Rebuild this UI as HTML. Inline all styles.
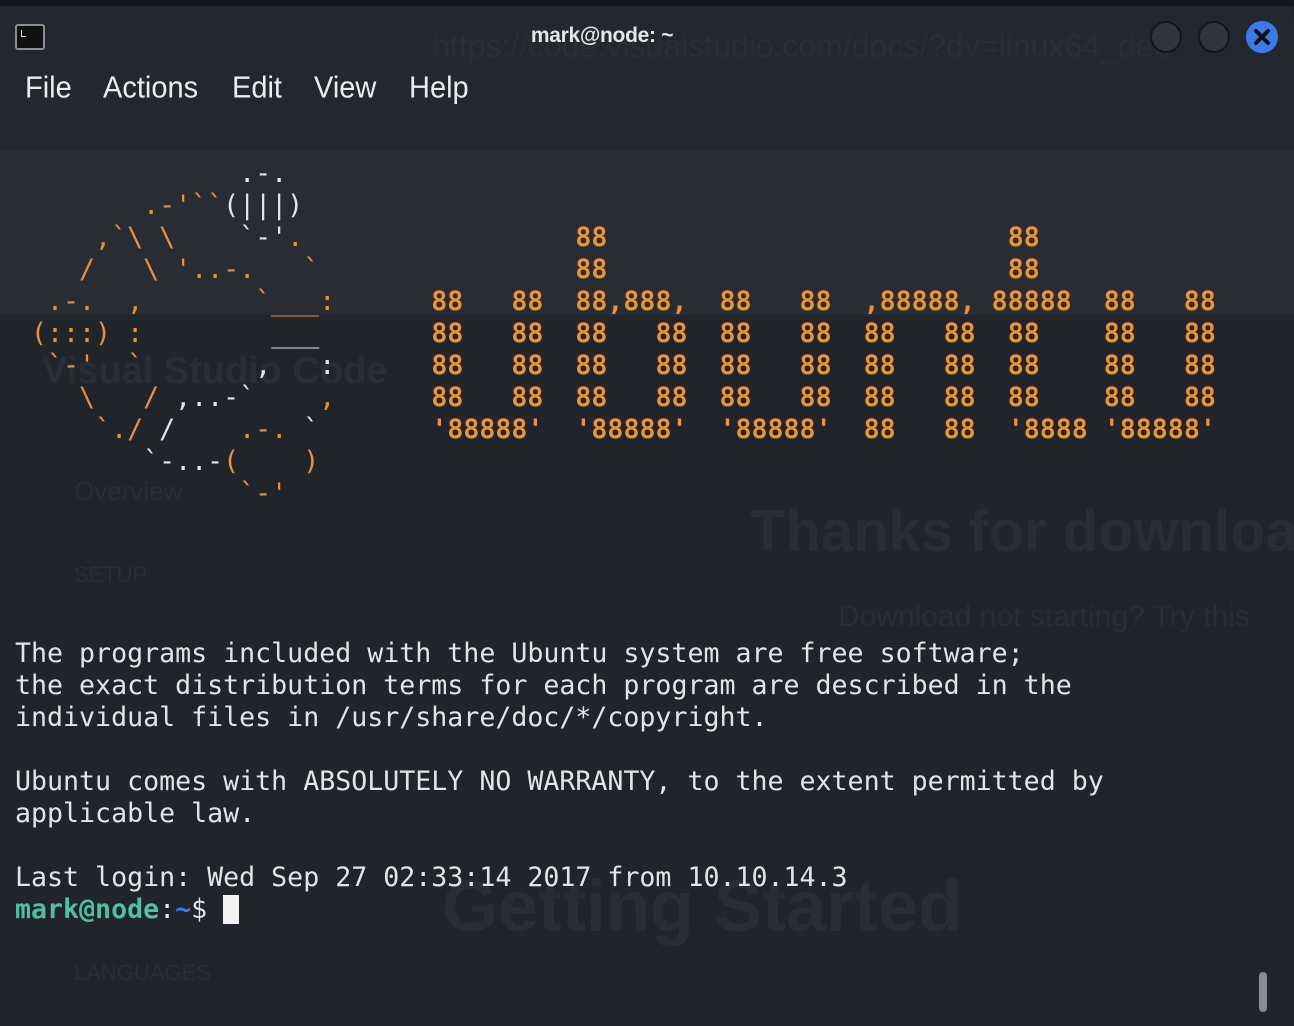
<!DOCTYPE html>
<html><head><meta charset="utf-8"><style>
html,body{margin:0;padding:0}
body{width:1294px;height:1026px;background:#21242b;position:relative;overflow:hidden;font-family:"Liberation Sans",sans-serif}
.topstrip{position:absolute;left:0;top:0;width:1294px;height:6px;background:#14161a}
.head{position:absolute;left:0;top:6px;width:1294px;height:144px;background:#24272e;border-top-right-radius:14px}
.band{position:absolute;left:0;top:150px;width:1294px;height:165px;background:#292c33}
.ghost{position:absolute;color:#2a2d34;white-space:nowrap}
.title{position:absolute;top:24px;left:522px;width:160px;text-align:center;color:#e6e6e6;font-size:21px;font-weight:bold;letter-spacing:-0.3px}
.menu{position:absolute;top:72px;color:#ececec;font-size:29px;transform:scaleY(1.05)}
.btn{position:absolute;top:21px;width:32px;height:32px;border-radius:50%;background:#31343c;border:2px solid #14161a;box-sizing:border-box}
.icon{position:absolute;left:15px;top:24px;width:30px;height:26px;border:2px solid #8a8d93;border-radius:3px;background:#111;box-sizing:border-box}
.icon:after{content:"";position:absolute;left:4px;top:4px;width:4px;height:6px;border-left:1px solid #ddd;border-bottom:1px solid #ddd}
pre{position:absolute;left:15px;top:158px;margin:0;font-family:"DejaVu Sans Mono","Liberation Mono",monospace;font-size:26.6px;line-height:32px;color:#e4e4e4}
.o{color:#e8923a}.w{color:#e4e4e4}.b{color:#e8923a;font-weight:bold}
.g{color:#4fc1a0;font-weight:bold}.bl{color:#3b7ae8;font-weight:bold}
.cur{display:inline-block;width:16px;height:29px;background:#f2f2f2;vertical-align:-6px}
.sb{position:absolute;left:1259px;top:972px;width:8px;height:40px;border-radius:4px;background:#8a8c90}
</style></head><body>
<div class="topstrip"></div>
<div class="head"></div>
<div class="band"></div>
<div class="ghost" style="left:432px;top:28px;font-size:32px">https://code.visualstudio.com/docs/?dv=linux64_deb</div>
<div class="ghost" style="left:30px;top:170px;font-size:24px;line-height:32px">We use optional cookies to improve your experience on our websites, such as through social media connectio<br>to display personalized advertising based on your online activity. If you reject optional cookies, only cookies<br>necessary to provide you the services will be used. You may change your selection by clicking “Manage Cook<br>the bottom of the page. Privacy Statement Third-Party Cookies</div>
<div class="ghost" style="left:42px;top:350px;font-size:38px;font-weight:bold">Visual Studio Code</div>
<div class="ghost" style="left:750px;top:498px;font-size:58px;font-weight:bold">Thanks for downloa</div>
<div class="ghost" style="left:838px;top:600px;font-size:30px">Download not starting? Try this</div>
<div class="ghost" style="left:442px;top:866px;font-size:72px;font-weight:bold">Getting Started</div>
<div class="ghost" style="left:74px;top:476px;font-size:26px">Overview</div>
<div class="ghost" style="left:74px;top:562px;font-size:22px">SETUP</div>
<div class="ghost" style="left:74px;top:960px;font-size:22px">LANGUAGES</div>
<div class="icon"></div>
<div class="title">mark@node: ~</div>
<div class="menu" style="left:25px">File</div>
<div class="menu" style="left:103px">Actions</div>
<div class="menu" style="left:232px">Edit</div>
<div class="menu" style="left:314px">View</div>
<div class="menu" style="left:409px">Help</div>
<div class="btn" style="left:1150px"></div>
<div class="btn" style="left:1198px"></div>
<div class="btn" style="left:1246px;background:#3b7ae8;border-color:#3b7ae8"><svg width="28" height="28" viewBox="0 0 28 28" style="position:absolute;left:0;top:0"><path d="M8 8L20 20M20 8L8 20" stroke="#111" stroke-width="4" stroke-linecap="round"/></svg></div>
<pre><span class="w">              .-.</span>
<span class="o">        .-'``</span><span class="w">(|||)</span>
<span class="o">     ,`\ \    </span><span class="w">`-'</span><span class="o">.</span>                 <span class="b">88</span>                         <span class="b">88</span>
<span class="o">    /   \ '..-.   `</span>                <span class="b">88</span>                         <span class="b">88</span>
<span class="o">  .-.  ,       `___:</span>      <span class="b">88   88  88,888,  88   88  ,88888, 88888  88   88</span>
<span class="o"> (:::) :        </span><span class="w">___</span>       <span class="b">88   88  88   88  88   88  88   88  88    88   88</span>
<span class="o">  `-'  `       </span><span class="w">,   :</span>      <span class="b">88   88  88   88  88   88  88   88  88    88   88</span>
<span class="o">    \   / </span><span class="w">,..-`</span><span class="o">    ,</span>      <span class="b">88   88  88   88  88   88  88   88  88    88   88</span>
<span class="o">     `./ </span><span class="w">/</span><span class="o">    .-.</span> <span class="w">`</span>       <span class="b">'88888'  '88888'  '88888'  88   88  '8888 '88888'</span>
<span class="w">        `-..-</span><span class="o">(    )</span>
<span class="o">              `-'</span>




The programs included with the Ubuntu system are free software;
the exact distribution terms for each program are described in the
individual files in /usr/share/doc/*/copyright.

Ubuntu comes with ABSOLUTELY NO WARRANTY, to the extent permitted by
applicable law.

Last login: Wed Sep 27 02:33:14 2017 from 10.10.14.3
<span class="g">mark@node</span>:<span class="bl">~</span>$ <span class="cur"></span></pre>
<div class="sb"></div>
</body></html>
